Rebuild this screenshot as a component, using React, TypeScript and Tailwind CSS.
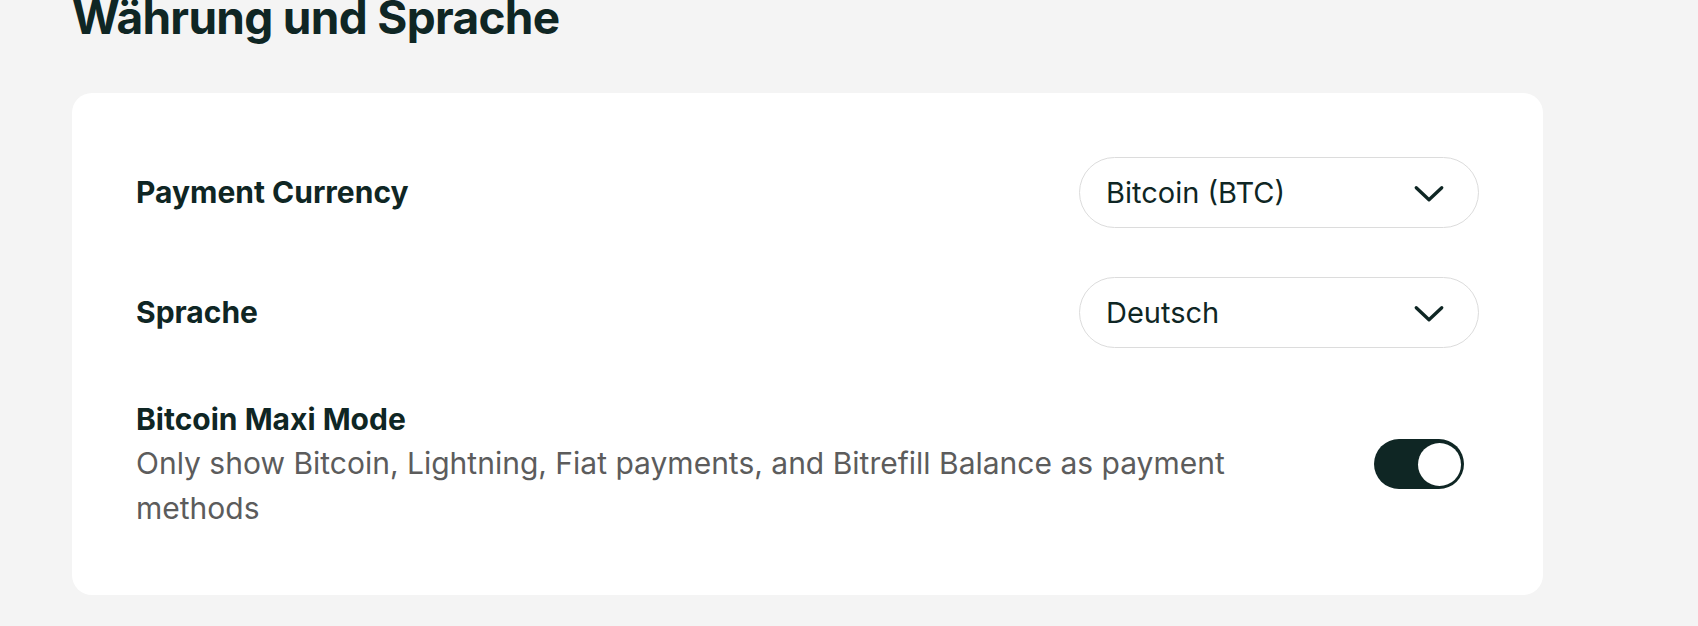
import { useState } from "react";

const Chevron = () => (
  <svg width="36" height="36" viewBox="0 0 24 24" fill="none" stroke="currentColor" strokeWidth="2.2" strokeLinecap="round" strokeLinejoin="round">
    <path d="M3.5 8.5L12 16.5L20.5 8.5" />
  </svg>
);

const SelectBox = ({ value }: { value: string }) => (
  <button className="w-[400px] h-[71px] shrink-0 rounded-full border-[1.5px] border-[#dcdcdc] bg-white pl-[26px] pr-[31px] flex items-center justify-between text-[29px] text-[#0f2624]">
    <span>{value}</span>
    <Chevron />
  </button>
);

const App = () => {
  const [maxi, setMaxi] = useState<boolean>(true);

  return (
    <div className="min-h-[626px] bg-[#f4f4f4] px-[72px] overflow-hidden font-['Inter',sans-serif] text-[#0f2624]">
      <h1 className="mt-[-6px] text-[46px] leading-[46px] font-bold tracking-[-0.015em]">
        Währung und Sprache
      </h1>

      {/* Settings card */}
      <div className="mt-[53px] w-[1471px] bg-white rounded-[20px] p-16 flex flex-col gap-[49px]">
        <div className="flex items-center justify-between">
          <span className="text-[30px] font-bold">Payment Currency</span>
          <SelectBox value="Bitcoin (BTC)" />
        </div>

        <div className="flex items-center justify-between">
          <span className="text-[30px] font-bold">Sprache</span>
          <SelectBox value="Deutsch" />
        </div>

        <div className="flex items-center justify-between">
          <div className="flex flex-col max-w-[1120px]">
            <span className="text-[30px] leading-[44px] font-bold">Bitcoin Maxi Mode</span>
            <p className="text-[30px] leading-[45px] text-[#5c5c5c]">
              Only show Bitcoin, Lightning, Fiat payments, and Bitrefill Balance as payment methods
            </p>
          </div>
          <button
            onClick={() => setMaxi(!maxi)}
            className={`mr-[15px] w-[90px] h-[50px] rounded-full p-[3px] flex items-center ${maxi ? "bg-[#0f2624] justify-end" : "bg-gray-300 justify-start"}`}
          >
            <span className="w-[43px] h-[43px] rounded-full bg-white" />
          </button>
        </div>
      </div>
    </div>
  );
};

export default App;
